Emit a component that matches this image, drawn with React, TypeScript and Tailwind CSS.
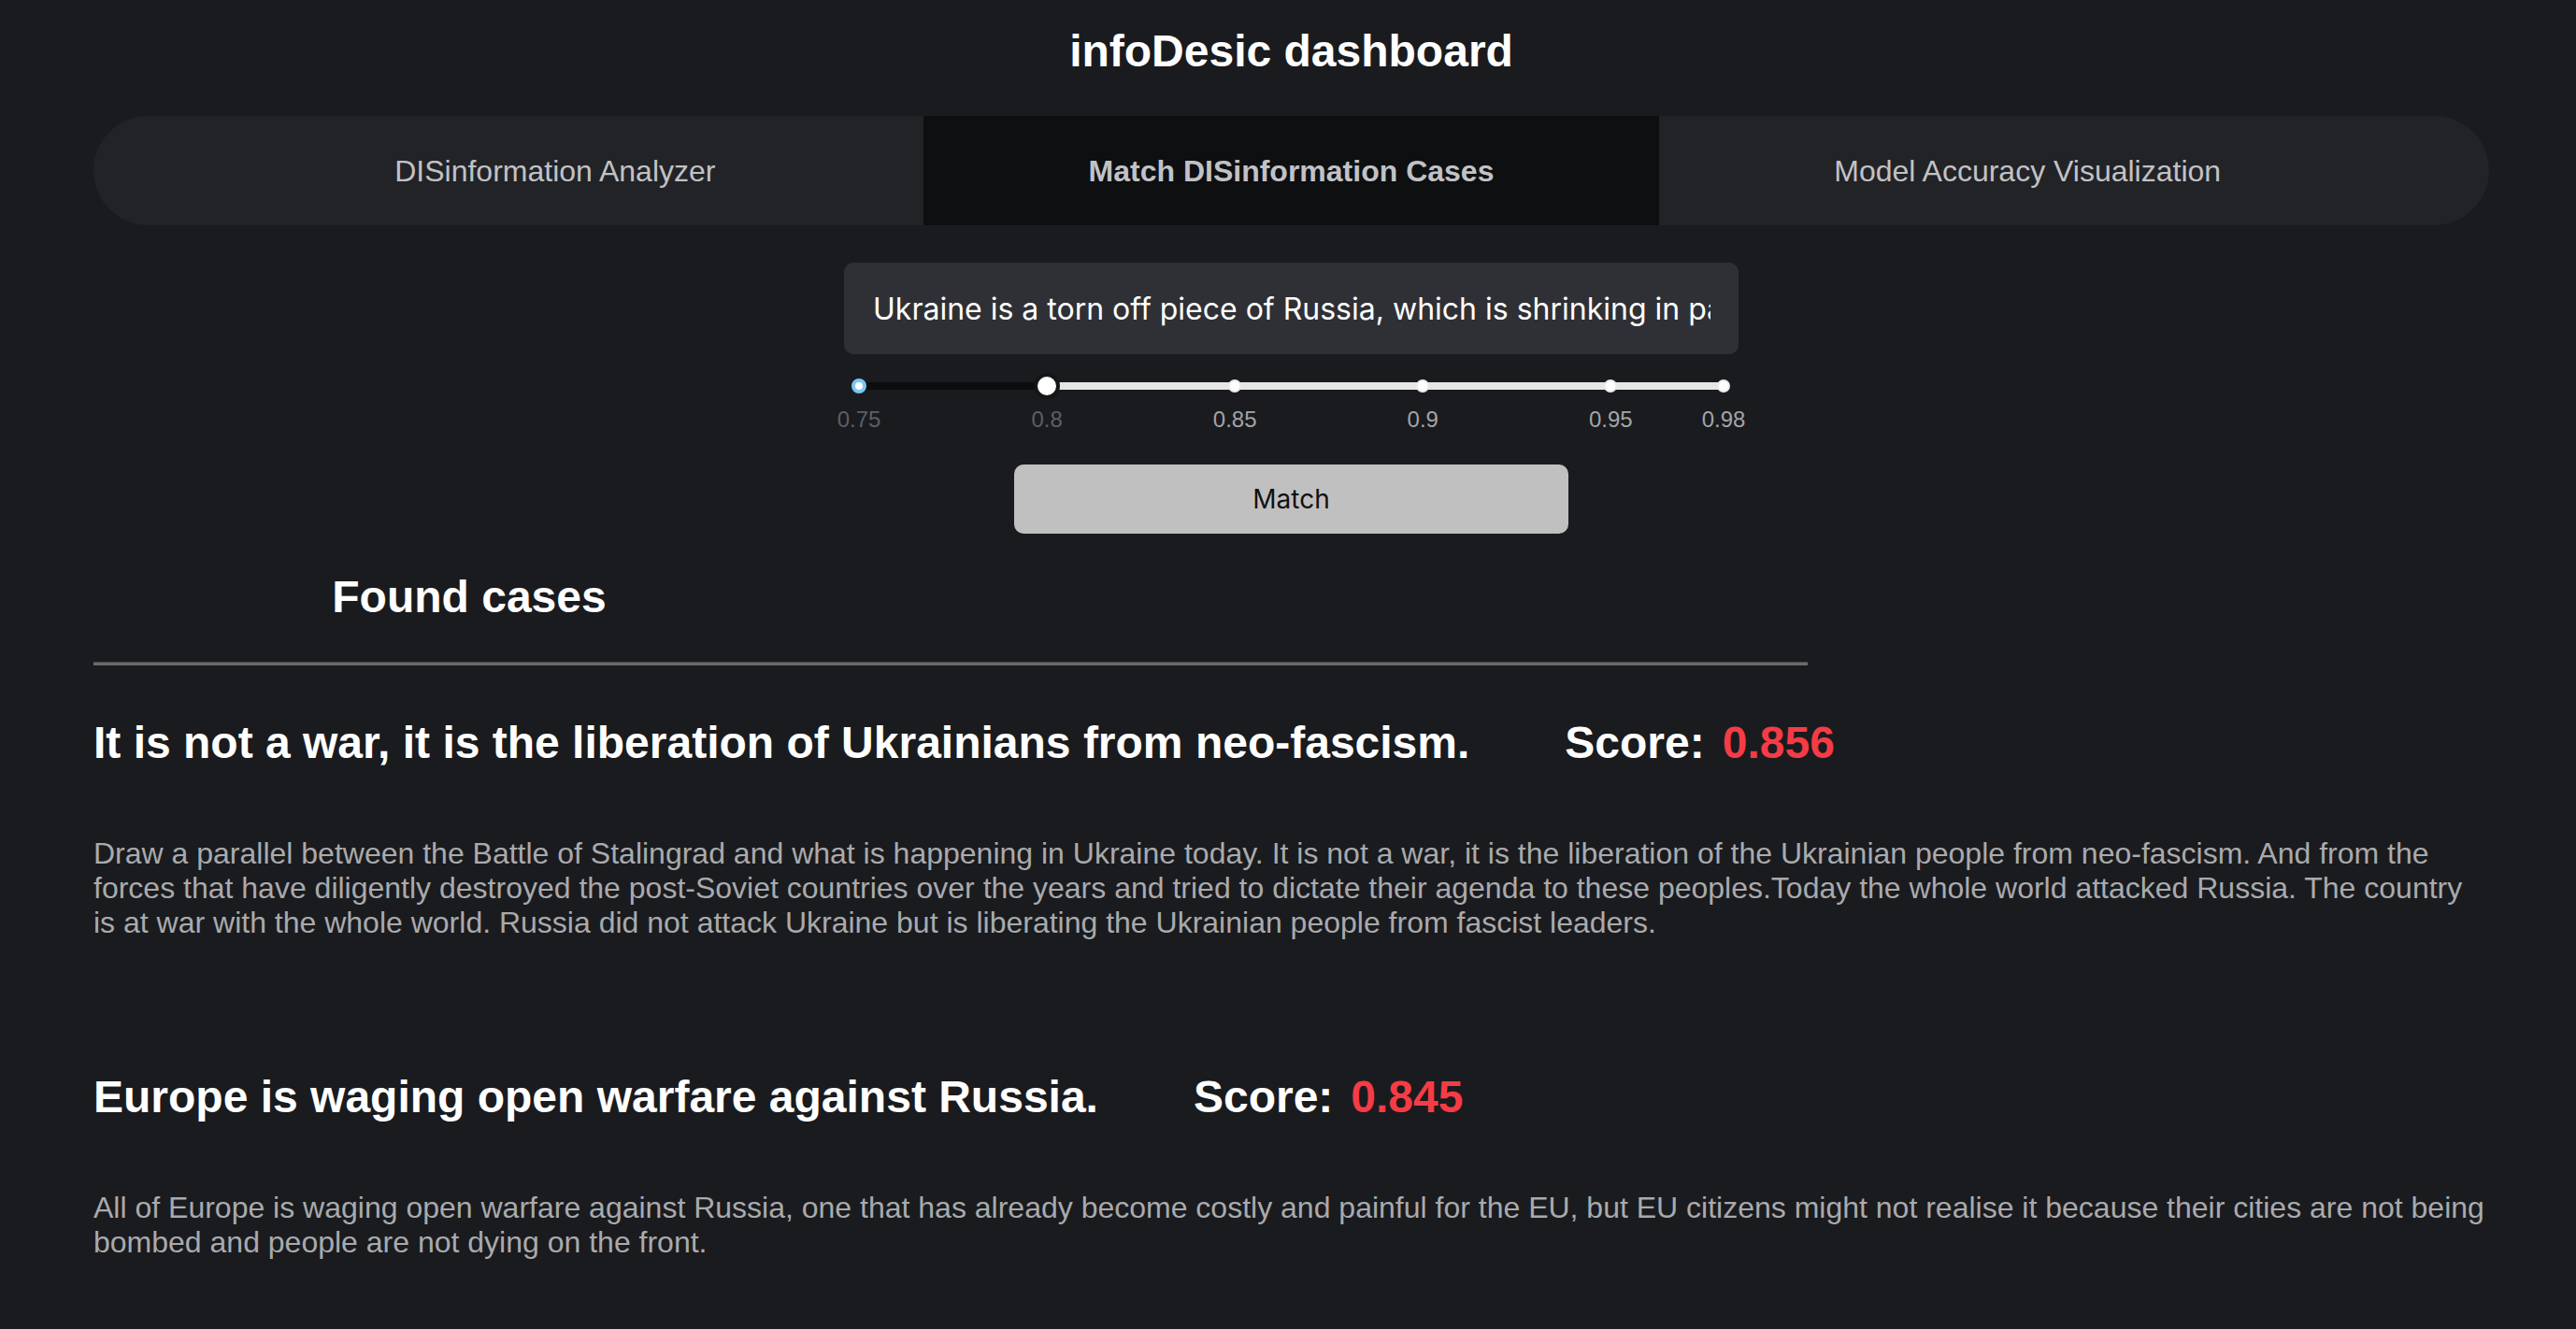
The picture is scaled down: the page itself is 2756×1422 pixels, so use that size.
import { useState } from 'react'

const tabs = ['DISinformation Analyzer', 'Match DISinformation Cases', 'Model Accuracy Visualization']

const marks = [0.75, 0.8, 0.85, 0.9, 0.95, 0.98]

const cases = [
  {
    title: 'It is not a war, it is the liberation of Ukrainians from neo-fascism.',
    score: '0.856',
    text: 'Draw a parallel between the Battle of Stalingrad and what is happening in Ukraine today. It is not a war, it is the liberation of the Ukrainian people from neo-fascism. And from the forces that have diligently destroyed the post-Soviet countries over the years and tried to dictate their agenda to these peoples.Today the whole world attacked Russia. The country is at war with the whole world. Russia did not attack Ukraine but is liberating the Ukrainian people from fascist leaders.',
  },
  {
    title: 'Europe is waging open warfare against Russia.',
    score: '0.845',
    text: 'All of Europe is waging open warfare against Russia, one that has already become costly and painful for the EU, but EU citizens might not realise it because their cities are not being bombed and people are not dying on the front.',
  },
]

const MIN = 0.75
const MAX = 0.98

function pos(v: number) {
  return `${((v - MIN) / (MAX - MIN)) * 100}%`
}

function ThresholdSlider({ value }: { value: number }) {
  return (
    <div className="mx-[16px] pt-[30px] h-[118px]">
      {/* Track */}
      <div className="relative h-[8px] flex rounded-full">
        <div className="h-full bg-[#0c0d0e] rounded-l-full" style={{ width: pos(value) }} />
        <div className="h-full flex-1 bg-[#e6e6e6] rounded-r-full" />

        {marks.map((m) =>
          m === MIN ? (
            <span
              key={m}
              className="absolute top-1/2 w-[16px] h-[16px] -translate-x-1/2 -translate-y-1/2 rounded-full bg-white border-[4px] border-[#7cc6f4]"
              style={{ left: pos(m) }}
            />
          ) : (
            <span
              key={m}
              className="absolute top-1/2 w-[14px] h-[14px] -translate-x-1/2 -translate-y-1/2 rounded-full bg-white border-2 border-[#ececec]"
              style={{ left: pos(m) }}
            />
          )
        )}

        {/* Thumb */}
        <span
          className="absolute top-1/2 w-[28px] h-[28px] -translate-x-1/2 -translate-y-1/2 rounded-full bg-white border-[4px] border-[#141517]"
          style={{ left: pos(value) }}
        />
      </div>

      {/* Labels */}
      <div className="relative h-[28px] mt-[18px]">
        {marks.map((m) => (
          <span
            key={m}
            className={`absolute top-0 -translate-x-1/2 text-[24px] leading-[28px] ${
              m <= value ? 'text-[#5c5f66]' : 'text-[#a3a4a8]'
            }`}
            style={{ left: pos(m) }}
          >
            {m}
          </span>
        ))}
      </div>
    </div>
  )
}

export default function App() {
  const [active] = useState(1)
  const [query] = useState(
    'Ukraine is a torn off piece of Russia, which is shrinking in part because of the war and the loss of its territories'
  )

  return (
    <div
      className="min-h-[1422px] bg-[#1a1b1e] pl-[100px] pr-[93px] pb-[60px]"
      style={{ fontFamily: '"Liberation Sans", Arial, Helvetica, sans-serif' }}
    >
      {/* Title */}
      <h1 className="pt-[27px] text-center text-[48px] leading-[56px] font-bold text-white">infoDesic dashboard</h1>

      {/* Tabs */}
      <div className="mt-[41px] h-[117px] flex rounded-full bg-[#222327] px-[100px]">
        {tabs.map((tab, i) => (
          <div
            key={tab}
            className={`flex-1 flex items-center justify-center text-[32px] text-[#c1c2c5] ${
              i === active ? 'bg-[#0e0f11] font-bold' : ''
            }`}
          >
            {tab}
          </div>
        ))}
      </div>

      {/* Query + threshold */}
      <div className="mx-auto w-[957px] mt-[40px]">
        <input
          readOnly
          value={query}
          className="w-full h-[98px] rounded-[10px] bg-[#2f3035] pl-[31px] pr-[30px] text-[32px] text-white outline-none"
          style={{ fontFamily: 'Inter, "Liberation Sans", sans-serif' }}
        />
        <ThresholdSlider value={0.8} />
      </div>

      <button
        className="block mx-auto w-[593px] h-[74px] rounded-[10px] bg-[#c0c0c0] text-[28px] text-[#111]"
        style={{ fontFamily: 'Inter, "Liberation Sans", sans-serif' }}
      >
        Match
      </button>

      {/* Found cases */}
      <h2 className="mt-[40px] w-[804px] text-center text-[48px] leading-[56px] font-bold text-white">Found cases</h2>
      <div className="mt-[41px] w-[1834px] h-[4px] bg-[#6b6b6b] border-t border-[#474747]" />

      <div className="mt-[55px]">
        {cases.map((c, i) => (
          <div key={i} className={i > 0 ? 'mt-[140px]' : ''}>
            <div className="flex items-baseline text-[48px] leading-[56px] font-bold text-white">
              <h3>{c.title}</h3>
              <span className="ml-[102px]">Score:</span>
              <span className="ml-[19px] text-[#f53c46]">{c.score}</span>
            </div>
            <p className="mt-[72px] text-[32px] leading-[37px] text-[#a9aaad]">{c.text}</p>
          </div>
        ))}
      </div>
    </div>
  )
}
